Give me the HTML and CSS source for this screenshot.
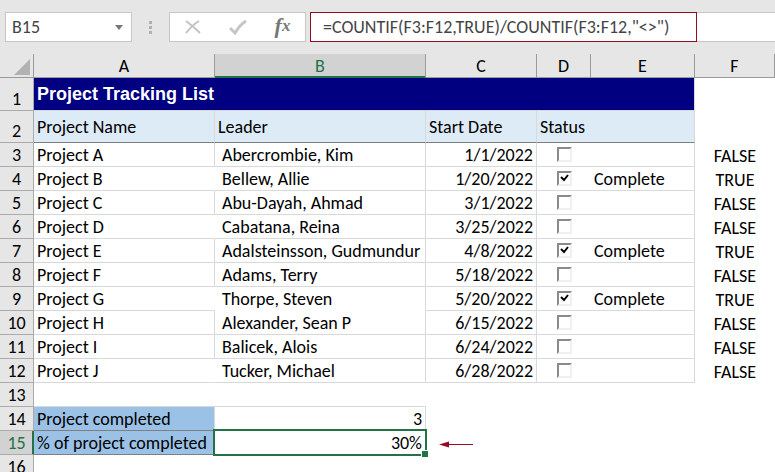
FILE: index.html
```
<!DOCTYPE html>
<html lang="en">
<head>
    <meta charset="UTF-8">
    <meta name="viewport" content="width=device-width, initial-scale=1.0">
    <title>Project Tracking List</title>
    <link rel="stylesheet" href="styles.css">
</head>
<body>
    <header class="formula-bar">
        <button type="button" class="name-box" aria-label="Name box">
            <span>B15</span>
            <svg width="8" height="5" viewBox="0 0 8 5"><path d="M0 0h8L4 5z" fill="#777"/></svg>
        </button>
        <div class="dots"><i></i><i></i><i></i></div>
        <div class="actions">
            <button type="button" aria-label="Cancel">
                <svg width="16" height="14" viewBox="0 0 16 14"><path d="M1 1c4 3 9 7 14 12M14 1C9 4 5 8 1 13" fill="none" stroke="#c3c3c3" stroke-width="2"/></svg>
            </button>
            <button type="button" aria-label="Enter">
                <svg width="18" height="15" viewBox="0 0 18 15"><path d="M1 8l5 5C9 8 12 4 17 1" fill="none" stroke="#c6c6c6" stroke-width="3"/></svg>
            </button>
            <button type="button" class="fx" aria-label="Insert function">f<small>x</small></button>
        </div>
        <input type="text" class="formula" aria-label="Formula" value='=COUNTIF(F3:F12,TRUE)/COUNTIF(F3:F12,"&lt;&gt;")'>
        <div class="formula-rest"></div>
    </header>

    <table class="sheet">
        <colgroup>
            <col class="col-num"><col class="col-a"><col class="col-b"><col class="col-c"><col class="col-d"><col class="col-e"><col>
        </colgroup>
        <thead>
            <tr>
                <th class="corner"><svg width="16" height="16" viewBox="0 0 16 16"><path d="M16 0v16H0z" fill="#b2b2b2"/></svg></th>
                <th>A</th><th class="active">B</th><th>C</th><th>D</th><th>E</th><th>F</th>
            </tr>
        </thead>
        <tbody>
            <tr class="title"><th>1</th><td colspan="5">Project Tracking List</td><td class="free"></td></tr>
            <tr class="heading"><th>2</th><td>Project Name</td><td>Leader</td><td>Start Date</td><td colspan="2">Status</td><td class="free"></td></tr>
            <tr><th>3</th><td>Project A</td><td class="leader">Abercrombie, Kim</td><td class="date">1/1/2022</td><td class="check"><input type="checkbox" aria-label="Project A complete"></td><td></td><td class="free">FALSE</td></tr>
            <tr><th>4</th><td class="open">Project B</td><td class="leader">Bellew, Allie</td><td class="date">1/20/2022</td><td class="check"><input type="checkbox" aria-label="Project B complete" checked></td><td>Complete</td><td class="free">TRUE</td></tr>
            <tr><th>5</th><td>Project C</td><td class="leader">Abu-Dayah, Ahmad</td><td class="date">3/1/2022</td><td class="check"><input type="checkbox" aria-label="Project C complete"></td><td></td><td class="free">FALSE</td></tr>
            <tr><th>6</th><td class="open">Project D</td><td class="leader">Cabatana, Reina</td><td class="date">3/25/2022</td><td class="check"><input type="checkbox" aria-label="Project D complete"></td><td></td><td class="free">FALSE</td></tr>
            <tr><th>7</th><td>Project E</td><td class="leader">Adalsteinsson, Gudmundur</td><td class="date">4/8/2022</td><td class="check"><input type="checkbox" aria-label="Project E complete" checked></td><td>Complete</td><td class="free">TRUE</td></tr>
            <tr><th>8</th><td>Project F</td><td class="leader">Adams, Terry</td><td class="date">5/18/2022</td><td class="check"><input type="checkbox" aria-label="Project F complete"></td><td></td><td class="free">FALSE</td></tr>
            <tr><th>9</th><td class="open">Project G</td><td class="leader merged">Thorpe, Steven</td><td class="date">5/20/2022</td><td class="check"><input type="checkbox" aria-label="Project G complete" checked></td><td>Complete</td><td class="free">TRUE</td></tr>
            <tr><th>10</th><td>Project H</td><td class="leader">Alexander, Sean P</td><td class="date">6/15/2022</td><td class="check"><input type="checkbox" aria-label="Project H complete"></td><td></td><td class="free">FALSE</td></tr>
            <tr><th>11</th><td>Project I</td><td class="leader">Balicek, Alois</td><td class="date">6/24/2022</td><td class="check"><input type="checkbox" aria-label="Project I complete"></td><td></td><td class="free">FALSE</td></tr>
            <tr><th>12</th><td class="open">Project J</td><td class="leader">Tucker, Michael</td><td class="date">6/28/2022</td><td class="check"><input type="checkbox" aria-label="Project J complete"></td><td></td><td class="free">FALSE</td></tr>
            <tr class="blank"><th>13</th><td class="lined"></td><td class="lined"></td><td></td><td></td><td></td><td></td></tr>
            <tr class="summary"><th>14</th><td class="label">Project completed</td><td class="value">3</td><td class="free" colspan="4"></td></tr>
            <tr class="summary"><th class="active">15</th><td class="label">% of project completed</td><td class="value selected">30%</td>
                <td class="free arrow" colspan="4"><svg width="34" height="9" viewBox="0 0 34 9"><path d="M8 4.500h26" stroke="#980a24"/><path d="M0 4.500l10-3v6z" fill="#980a24"/></svg></td></tr>
            <tr class="blank"><th>16</th><td colspan="6"></td></tr>
        </tbody>
    </table>
</body>
</html>
```
FILE: styles.css
```
* {
    box-sizing: border-box;
}
body {
    margin: 0;
    background: #fff;
    color: #000;
    font-family: Carlito, Lato, sans-serif;
    font-size: 18px;
    overflow: hidden;
}
button {
    font: inherit;
    padding: 0;
    border: none;
    background: none;
}

/* formula bar */
.formula-bar {
    display: flex;
    height: 54px;
    padding: 12px 0;
    background: #e6e6e6;
    color: #444;
}
.name-box {
    display: flex;
    align-items: center;
    justify-content: space-between;
    width: 127px;
    margin-left: 5px;
    padding: 0 8px 0 6px;
    background: #fff;
    border: 1px solid #c6c6c6;
    color: #444;
}
.dots {
    display: flex;
    flex-direction: column;
    justify-content: center;
    gap: 2px;
    width: 37px;
    padding-left: 17px;
}
.dots i {
    width: 3px;
    height: 3px;
    background: #b0b0b0;
}
.actions {
    display: flex;
    width: 137px;
    margin-right: 4px;
    background: #fff;
    border: 1px solid #c6c6c6;
}
.actions button {
    display: flex;
    flex: 1;
    align-items: center;
    justify-content: center;
}
.actions .fx {
    padding-bottom: 3px;
    color: #777;
    font: italic bold 22px "Liberation Serif", serif;
}
.fx small {
    font-size: 17px;
}
.formula {
    width: 387px;
    padding: 0 12px;
    border: 1px solid #980a24;
    border-radius: 0;
    background: #fff;
    color: #444;
    font: inherit;
    outline: none;
}
.formula-rest {
    flex: 1;
    background: #fff;
    border: solid #c6c6c6;
    border-width: 1px 0;
}

/* worksheet */
.sheet {
    width: 100%;
    table-layout: fixed;
    border-collapse: separate;
    border-spacing: 0;
    line-height: 22px;
}
.col-num { width: 34px; }
.col-a { width: 181px; }
.col-b { width: 211px; }
.col-c { width: 111px; }
.col-d { width: 54px; }
.col-e { width: 104px; }
.sheet th {
    height: 24px;
    padding: 0;
    background: #e6e6e6;
    border: solid #ababab;
    border-width: 0 1px 1px 0;
    font-weight: normal;
    vertical-align: bottom;
}
.sheet thead th {
    border-color: #9b9b9b;
}
.sheet thead .active {
    background: #d2d2d2;
    border-bottom-color: #217346;
    box-shadow: inset 0 -1px #217346;
    color: #217346;
}
.sheet tbody .active {
    background: #d2d2d2;
    border-right-color: #217346;
    box-shadow: inset -1px 0 #217346;
    color: #217346;
}
.sheet .corner {
    padding: 0 3px 2px 0;
    line-height: 0;
    text-align: right;
}
.sheet td {
    height: 24px;
    padding: 1px 3px 0;
    border: solid #d9d9d9;
    border-width: 0 1px 1px 0;
    white-space: nowrap;
}
.sheet .open {
    border-right-color: #fff;
}
.sheet .merged {
    border-bottom-color: #fff;
}
.sheet .leader {
    padding-left: 7px;
}
.sheet .date {
    text-align: right;
}
.sheet .check {
    padding: 0 0 0 20px;
    border-right: none;
    line-height: 0;
}
.sheet .free {
    border: none;
    text-align: center;
}
.title td {
    height: 33px;
    background: #000080;
    color: #fff;
    font: bold 18px "Liberation Sans", Arial, sans-serif;
}
.heading td {
    height: 32px;
    background: #ddebf7;
    border-bottom-color: #7f7f7f;
}
.title .free,
.heading .free {
    background: #fff;
}
.blank td {
    border: none;
}
.blank .lined {
    border-bottom: 1px solid #d9d9d9;
}
.summary .label {
    background: #9bc2e6;
    border-bottom-color: #7f7f7f;
}
.summary .value {
    text-align: right;
}
.summary .selected {
    position: relative;
    border-color: transparent;
}
/* selection frame with its fill handle */
.selected::before {
    content: "";
    position: absolute;
    inset: -2px -2px -2px -2px;
    border: 2px solid #217346;
}
.selected::after {
    content: "";
    position: absolute;
    right: -3px;
    bottom: -3px;
    width: 6px;
    height: 6px;
    background: #217346;
    border: solid #fff;
    border-width: 1px 0 0 1px;
}
.sheet .arrow {
    padding: 2px 0 0 13px;
    text-align: left;
    line-height: 0;
}

/* sunken check boxes */
input[type="checkbox"] {
    appearance: none;
    width: 15px;
    height: 15px;
    margin: 0;
    border: 2px solid;
    border-color: #8a8a8a #f0f0f0 #f0f0f0 #8a8a8a;
    background: #fff;
}
input[type="checkbox"]:checked {
    background: #fff url("data:image/svg+xml,%3Csvg xmlns='http://www.w3.org/2000/svg' viewBox='0 0 11 11'%3E%3Cpath d='M2 4l3 3L9 2' fill='none' stroke='%23000' stroke-width='2'/%3E%3C/svg%3E") center / 11px 11px no-repeat;
}
```
